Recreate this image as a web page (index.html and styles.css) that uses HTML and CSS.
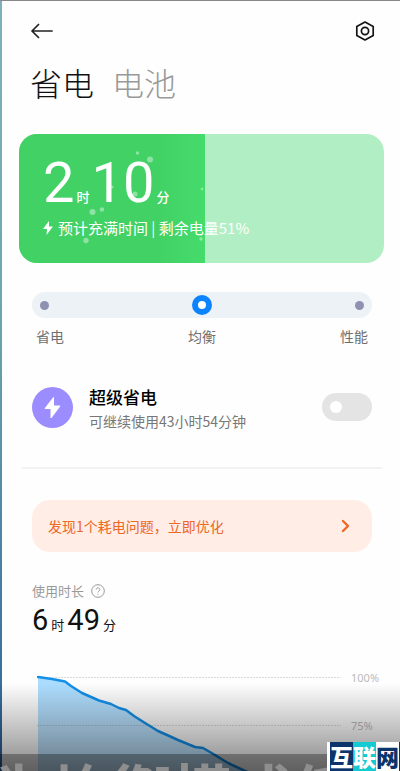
FILE: index.html
```html
<!DOCTYPE html>
<html lang="zh-CN">
<head>
<meta charset="utf-8">
<meta name="viewport" content="width=device-width, initial-scale=1">
<title>省电</title>
<link rel="stylesheet" href="styles.css">
</head>
<body>
<main class="screen">
  <header class="topbar">
    <button class="icon-btn" type="button" aria-label="返回">
      <svg width="22" height="16" viewBox="0 0 22 16"><path d="M7.500 1.500 1 8l6.500 6.500M1 8h20" fill="none" stroke="#222" stroke-width="1.700" stroke-linecap="round" stroke-linejoin="round"/></svg>
    </button>
    <button class="icon-btn" type="button" aria-label="设置">
      <svg width="20" height="20" viewBox="0 0 20 20"><path d="M10 1 18.200 5.500v9L10 19 1.800 14.500v-9Z" fill="none" stroke="#151515" stroke-width="1.700" stroke-linejoin="round"/><circle cx="10" cy="10" r="3.600" fill="none" stroke="#151515" stroke-width="1.700"/></svg>
    </button>
  </header>
  <nav class="tabs">
    <a class="tab tab-active" href="#saver">省电</a>
    <a class="tab" href="#battery">电池</a>
  </nav>

  <section class="charge">
    <div class="charge-fill"></div>
    <svg class="bubbles" width="190" height="130" viewBox="0 0 190 130" fill="#fff" fill-opacity=".4"><circle cx="118.500" cy="19" r="1.700"/><circle cx="131" cy="25.500" r="3"/><circle cx="116" cy="60" r="2.500"/><circle cx="73.500" cy="78" r="3"/><circle cx="83" cy="75.500" r="2.300"/><circle cx="67" cy="106.500" r="2.700"/><circle cx="183" cy="55" r="1.300"/><circle cx="182" cy="105" r="1.700"/><circle cx="93" cy="53" r="1.500"/></svg>
    <div class="charge-time"><span class="big">2</span><span class="unit">时</span><span class="big">10</span><span class="unit">分</span></div>
    <div class="charge-note">
      <svg width="10" height="14" viewBox="0 0 10 14"><path d="M6 0 0 8h4L3.500 14 10 5.500H6Z" fill="#fff"/></svg>
      <span>预计充满时间 | 剩余电量51%</span>
    </div>
  </section>

  <section class="modes">
    <div class="track">
      <input class="mode" type="radio" name="mode" id="m1">
      <input class="mode" type="radio" name="mode" id="m2" checked>
      <input class="mode" type="radio" name="mode" id="m3">
    </div>
    <div class="mode-labels">
      <label for="m1">省电</label><label for="m2">均衡</label><label for="m3">性能</label>
    </div>
  </section>

  <section class="super">
    <svg class="super-icon" width="41" height="41" viewBox="0 0 41 41"><circle cx="20.500" cy="20.500" r="20.500" fill="#9b8dff"/><path d="M21.500 10.500 13 21.500h6V31L28 19h-6.500Z" fill="#fff" stroke="#fff" stroke-linejoin="round"/></svg>
    <label class="super-text" for="super"><span class="super-title">超级省电</span><span class="super-sub">可继续使用43小时54分钟</span></label>
    <input class="switch" type="checkbox" id="super">
  </section>
  <hr class="rule">

  <button class="alert" type="button">
    <span>发现1个耗电问题，立即优化</span>
    <svg width="9" height="14" viewBox="0 0 9 14"><path d="m2 2 5 5-5 5" fill="none" stroke="#ee6724" stroke-width="2.400" stroke-linecap="round" stroke-linejoin="round"/></svg>
  </button>

  <section class="usage">
    <div class="usage-label"><span>使用时长</span>
      <svg width="14" height="14" viewBox="0 0 14 14" fill="none" stroke="#999"><circle cx="7" cy="7" r="6.300"/><path d="M5.200 5.500a1.800 1.800 0 1 1 2.700 1.600Q7 7.600 7 8.500M7 9.800v1"/></svg>
    </div>
    <div class="usage-time"><span class="num">6</span><span class="u">时</span><span class="num">49</span><span class="u">分</span></div>
  </section>

  <section class="chart">
    <svg class="plot" width="304" height="110" viewBox="0 0 304 110">
      <defs><linearGradient id="area" x1="0" y1="0" x2="0" y2="1"><stop offset="0" stop-color="#a9dcff"/><stop offset="1" stop-color="#c5e4fb"/></linearGradient></defs>
      <path d="M1 7 15 9 28 11.500 34 16 45 23 62 30.500 74 34 82 38 89 40 97 46 108 53 121 61 130 65 141 70 158 77 166 78 178 85 191 93 208 101 230 110H1Z" fill="url(#area)"/>
      <path d="M0 7.500h304M0 55.500h304" stroke="#888" stroke-opacity=".3" stroke-dasharray="2 1"/>
      <path d="M1 7 15 9 28 11.500 34 16 45 23 62 30.500 74 34 82 38 89 40 97 46 108 53 121 61 130 65 141 70 158 77 166 78 178 85 191 93 208 101 230 110" fill="none" stroke="#1490e8" stroke-width="2.500" stroke-linecap="round" stroke-linejoin="round"/>
    </svg>
    <div class="scale"><span>100%</span><span>75%</span></div>
  </section>
</main>
<div class="edge"></div>
<div class="shade"></div>
<div class="caption"><span>为均衡模式低</span></div>
<div class="mark"><span class="navy">互</span><span class="cyan">联</span><span class="plain">网</span></div>
</body>
</html>
```
FILE: styles.css
```css
* { box-sizing: border-box; }
body {
  margin: 0;
  height: 100vh;
  position: relative;
  overflow: hidden;
  background: #fefefe;
  border-top: 1px solid #888;
  color: #111;
  font-family: "Noto Sans CJK SC", sans-serif;
}
button { border: 0; background: none; padding: 0; font: inherit; color: inherit; }
a { color: inherit; text-decoration: none; }
svg { display: block; flex: none; }

.topbar { display: flex; justify-content: space-between; align-items: center; padding: 20px 25px 0 31px; }
.tabs { display: flex; gap: 18px; padding: 19px 30px 0; }
.tab { font-size: 32px; line-height: 44px; font-weight: 300; color: #999; }
.tab-active { color: #111; }

.charge {
  position: relative;
  margin: 30px 16px 0 19px;
  height: 129px;
  padding: 20px 24px 0;
  border-radius: 18px;
  overflow: hidden;
  background: #b2eec3;
  color: #fff;
}
.charge-fill { position: absolute; inset: 0 49% 0 0; background: linear-gradient(90deg, #42d165 75%, #45dc6c); }
.bubbles { position: absolute; left: 0; top: 0; }
.charge-time { position: relative; display: flex; align-items: baseline; gap: 2px; height: 64px; }
.big { font: 400 56px/58px Roboto, sans-serif; }
.unit { font-size: 13px; line-height: 20px; font-weight: 500; }
.charge-note { position: relative; display: flex; align-items: center; gap: 5px; font-size: 15px; line-height: 20px; }

.modes { margin: 29px 28px 0 32px; }
.track { display: flex; justify-content: space-between; align-items: center; height: 26px; padding: 0 8px; border-radius: 13px; background: #edf2f6; }
.mode { appearance: none; margin: 0; width: 9px; height: 9px; border-radius: 50%; background: #8e91b0; }
.mode:checked { width: 20px; height: 20px; border: 6px solid #0d83fd; background: #fff; }
.mode-labels { display: flex; justify-content: space-between; padding: 8px 4px 0; font-size: 14px; line-height: 20px; color: #707070; }

.super { display: flex; align-items: center; margin: 37px 28px 0 32px; height: 48px; }
.super-text { flex: 1; padding: 4px 0 0 16px; }
.super-title, .super-sub { display: block; }
.super-title { font-size: 17px; line-height: 24px; font-weight: 500; color: #000; }
.super-sub { font-size: 14px; line-height: 24px; color: #777; }
.switch { appearance: none; margin: 0; width: 50px; height: 28px; border-radius: 14px; background: #e4e4e4; padding: 8px; }
.switch::before { content: ""; display: block; width: 12px; height: 12px; border-radius: 50%; background: #fff; }
.rule { margin: 36px 18px 0 22px; border: 0; height: 2px; background: #f2f2f2; }

.alert { display: flex; justify-content: space-between; align-items: center; width: calc(100% - 60px); margin: 31px 28px 0 32px; height: 52px; padding: 0 22px 0 16px; border-radius: 18px; background: #ffede6; color: #ee6724; font-size: 14px; }

.usage { padding: 29px 32px 0; }
.usage-label { display: flex; align-items: center; gap: 7px; font-size: 13px; line-height: 20px; color: #999; }
.usage-time { display: flex; align-items: baseline; gap: 3px; height: 38px; }
.num { font: 400 29px/38px Roboto, sans-serif; }
.u { font-size: 13px; line-height: 20px; }

.chart { display: flex; margin: 31px 21px 0 37px; }
.plot { flex: none; }
.scale { display: flex; flex-direction: column; gap: 32px; padding-left: 10px; font: 11px/16px "Noto Sans", sans-serif; color: #bbb; }

.edge { position: absolute; left: 0; top: 0; bottom: 0; width: 2px; background: linear-gradient(#7fb2b8, #6ea6ae 40%, #4e84a4 70%, #2b629a); }
.shade { position: absolute; left: 0; right: 0; bottom: 0; height: 88px; background: linear-gradient(rgba(0,0,0,0), rgba(0,0,0,.46)); }
.caption { position: absolute; left: 0; right: 73px; bottom: 0; height: 17px; text-indent: -8px; overflow: hidden; background: rgba(0,0,0,.3); color: #8e8e8e; font-size: 60px; line-height: 70px; font-weight: 700; white-space: nowrap; }
.mark { position: absolute; right: 0; bottom: 0; display: flex; height: 29px; padding-left: 3px; border-right: 1px solid #0c356b; background: #fff; font-size: 23px; line-height: 29px; font-weight: 900; color: #fff; }
.mark span { width: 23px; text-align: center; }
.navy { background: #0c356b; }
.cyan { background: #13cbd0; }
.plain { color: #0c356b; }
```
